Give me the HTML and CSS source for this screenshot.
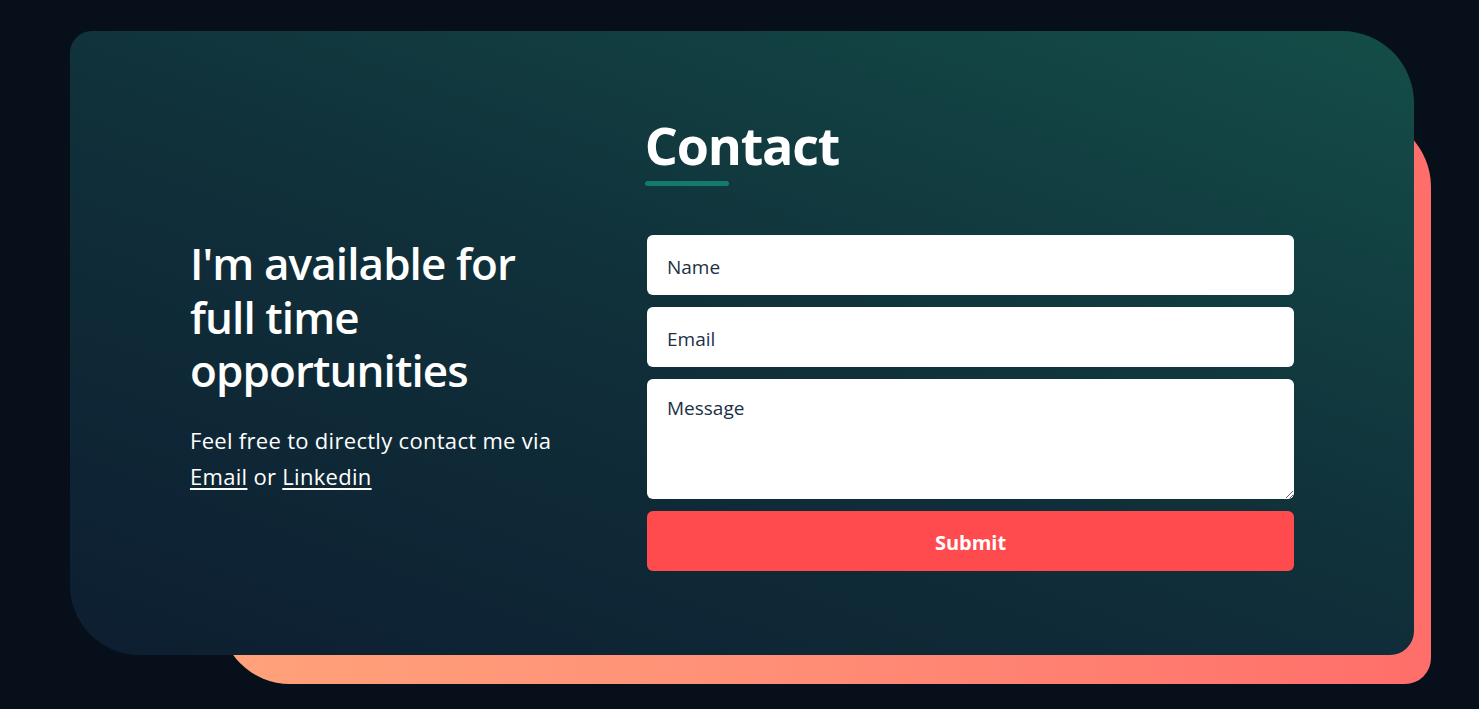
FILE: index.html
```html
<!DOCTYPE html>
<html lang="en">
<head>
<meta charset="utf-8">
<title>Contact</title>
<link rel="stylesheet" href="styles.css">
</head>
<body>
<main class="page">
  <section class="wrap">
    <div class="backdrop"></div>
    <div class="card">
      <div class="title-row">
        <div class="title">
          <h2 class="title-text">Contact</h2>
          <div class="title-bar"></div>
        </div>
      </div>
      <div class="row">
        <div class="intro">
          <h3 class="intro-head">I'm available for full time opportunities</h3>
          <p class="intro-text">Feel free to directly contact me via <a href="#" class="link">Email</a> or <a href="#" class="link">Linkedin</a></p>
        </div>
        <form class="form">
          <input class="field" type="text" placeholder="Name">
          <input class="field" type="email" placeholder="Email">
          <textarea class="field area" placeholder="Message"></textarea>
          <button class="submit" type="button">Submit</button>
        </form>
      </div>
    </div>
  </section>
</main>
</body>
</html>
```

FILE: styles.css
```css
* { box-sizing: border-box; }
html, body {
  margin: 0;
  background: #07101a;
  font-family: "Open Sans", "Noto Sans", sans-serif;
  color: #fff;
}
.page {
  width: 1479px;
  height: 709px;
  padding: 31px 65px 0 70px;
}
.wrap {
  position: relative;
  width: 1344px;
}
.backdrop {
  position: absolute;
  left: 150px;
  top: 84px;
  right: -17px;
  bottom: -29px;
  border-radius: 20px 72px 26px 70px;
  background: linear-gradient(90deg, #ffa27a 0%, #ff8f76 45%, #ff6e6a 100%);
}
.card {
  position: relative;
  height: 624px;
  padding: 83px 120px 0;
  border-radius: 22px 72px 24px 70px;
  background: linear-gradient(20deg, #0d1e31 0%, #10303a 50%, #144d48 100%);
}
.title-row {
  display: flex;
  justify-content: center;
}
.title-text {
  margin: 0;
  font-size: 52px;
  line-height: 62px;
  font-weight: 700;
  letter-spacing: -1.2px;
}
.title-bar {
  width: 84px;
  height: 5px;
  margin-top: 5px;
  border-radius: 3px;
  background: #137a6c;
}
.row {
  display: grid;
  grid-template-columns: 395px 647px;
  column-gap: 62px;
  align-items: start;
  margin-top: 49px;
}
.intro-head {
  margin: 2px 0 0;
  font-size: 44px;
  line-height: 53.5px;
  font-weight: 600;
  letter-spacing: -0.9px;
}
.intro-text {
  margin: 24px 0 0;
  font-size: 22px;
  line-height: 36px;
  letter-spacing: 0.3px;
}
.link {
  color: #fff;
  text-decoration: underline;
  text-underline-offset: 3px;
}
.form {
  display: flex;
  flex-direction: column;
  gap: 12px;
}
.field {
  display: block;
  width: 100%;
  height: 60px;
  padding: 3px 20px 0;
  border: none;
  border-radius: 6px;
  background: #fff;
  font-family: "Open Sans", "Noto Sans", sans-serif;
  font-size: 19px;
  color: #1c3046;
  outline: none;
}
.field::placeholder {
  color: #1c3046;
  opacity: 1;
}
.area {
  height: 120px;
  padding: 16px 20px;
  resize: vertical;
}
.submit {
  height: 60px;
  padding-top: 3px;
  border: none;
  border-radius: 6px;
  background: #ff4b4e;
  color: #fff;
  font-family: "Open Sans", "Noto Sans", sans-serif;
  font-size: 20px;
  font-weight: 700;
}
```
